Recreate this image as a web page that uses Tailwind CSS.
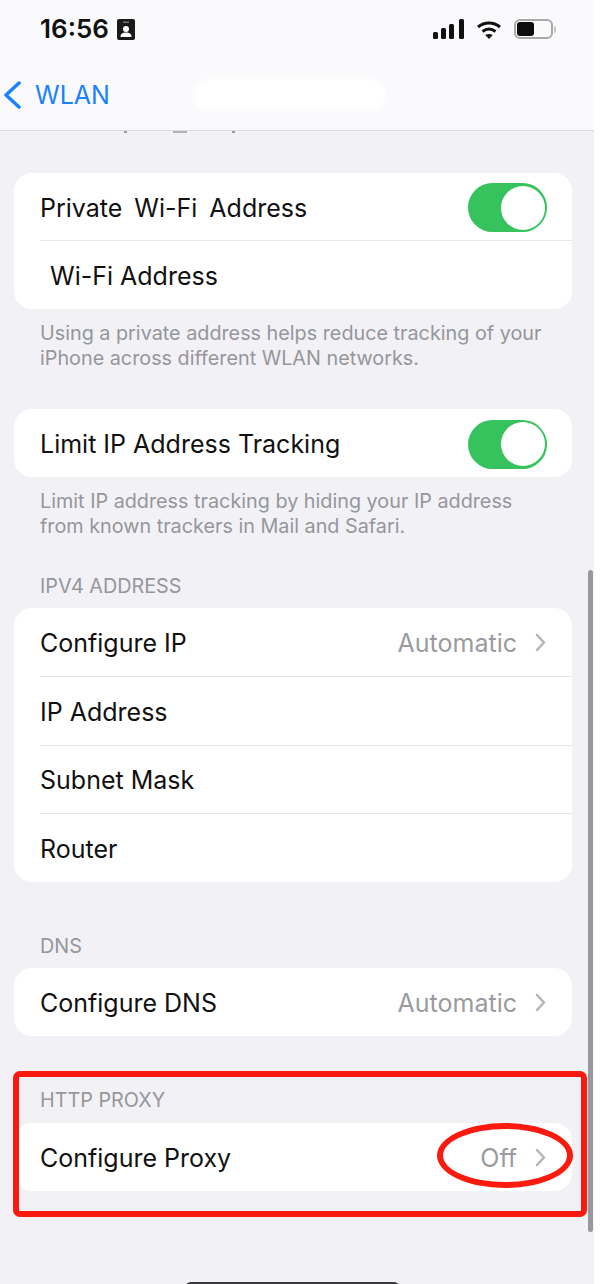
<!DOCTYPE html>
<html>
<head>
    <title>WLAN</title>
    <script src="https://cdn.jsdelivr.net/npm/@tailwindcss/browser@4"></script>
</head>
<body class="bg-white">
    <div class="relative w-[600px] h-[1284px] overflow-hidden font-['Inter','Liberation_Sans',sans-serif]">
        <div class="w-[594px] h-full bg-[#f1f1f6]">
            <!-- status bar + nav -->
            <div class="h-[131px] bg-[#fafafc] border-b border-[#dcdce0]">
                <div class="h-[58px] pl-[40px] pr-[38px] flex items-center justify-between">
                    <div class="flex items-center gap-[8px]">
                        <span class="text-[26px] leading-none font-semibold text-[#111]">16:56</span>
                        <svg width="18" height="21" viewBox="0 0 18 21"><rect width="18" height="21" rx="2" fill="#1a1a1a"/><rect x="6" y="2.500" width="6" height="1.400" fill="#777"/><circle cx="9" cy="10" r="3" fill="#fff"/><path d="M3.500 18c0-3.500 2.500-4.500 5.500-4.500s5.500 1 5.500 4.500z" fill="#fff"/></svg>
                    </div>
                    <div class="flex items-center gap-[12px]">
                        <svg width="31" height="20" viewBox="0 0 31 20"><rect x="0" y="13" width="5" height="7" rx="1.500" fill="#111"/><rect x="8" y="9" width="5" height="11" rx="1.500" fill="#111"/><rect x="16" y="5" width="5" height="15" rx="1.500" fill="#111"/><rect x="26" y="0" width="5" height="20" rx="1.500" fill="#111"/></svg>
                        <svg width="26" height="19" viewBox="0 0 26 19" fill="none" stroke="#111" stroke-width="3"><path d="M2 7c6.500-5.500 15.500-5.500 22 0"/><path d="M6.500 11.500c4-3 9-3 13 0"/><path d="M13 19l-3.800-4c2.200-1.500 5.400-1.500 7.600 0z" fill="#111" stroke="none"/></svg>
                        <div class="flex items-center gap-[1px]">
                            <div class="w-[39px] h-[20px] rounded-[6px] border-2 border-[#a9a9a9] p-[1px]">
                                <div class="w-[17px] h-full rounded-[3px] bg-[#0c0c0c]"></div>
                            </div>
                            <div class="w-[2px] h-[7px] rounded-r bg-[#c4c4c4]"></div>
                        </div>
                    </div>
                </div>
                <div class="h-[70px] mt-[2px] flex items-center pl-[3px]">
                    <svg width="18" height="30" viewBox="0 0 18 30" fill="none" stroke="#1a82fb" stroke-width="3.500" stroke-linecap="round" stroke-linejoin="round"><path d="M16 3L3 15l13 12"/></svg>
                    <span class="ml-[14px] text-[25px] leading-none text-[#1a82fb]">WLAN</span>
                    <div class="w-[193px] h-[32px] ml-[83px] rounded-full bg-white blur-[2px]"></div>
                </div>
            </div>

            <main class="relative pl-[14px] pr-[22px] pt-[42px]">
                <!-- bits of the row scrolled under the nav bar -->
                <div class="absolute left-[124px] top-0 w-[3px] h-[2px] bg-[#9a9a9f]"></div>
                <div class="absolute left-[173px] top-0 w-[14px] h-[2px] bg-[#b4b4b8]"></div>
                <div class="absolute left-[232px] top-0 w-[3px] h-[2px] bg-[#9a9a9f]"></div>

                <section class="bg-white rounded-[18px] pl-[26px]">
                    <div class="h-[68px] flex items-center justify-between pr-[25px] border-b border-[#e6e6ea]">
                        <span class="pt-[3px] text-[25px] leading-none text-[#111] [word-spacing:5px]">Private Wi-Fi Address</span>
                        <div class="translate-y-[1px] w-[79px] h-[49px] rounded-full bg-[#36c25c] flex justify-end items-center pr-[2px]">
                            <div class="w-[44px] h-[44px] rounded-full bg-white"></div>
                        </div>
                    </div>
                    <div class="h-[68px] flex items-center pl-[10px]">
                        <span class="pt-[2px] text-[25px] leading-none text-[#111]">Wi-Fi Address</span>
                    </div>
                </section>
                <p class="pl-[26px] pt-[12px] text-[19.800px] leading-[25px] text-[#96969b] whitespace-nowrap">Using a private address helps reduce tracking of your<br>iPhone across different WLAN networks.</p>

                <section class="mt-[38px] bg-white rounded-[18px] pl-[26px]">
                    <div class="h-[68px] flex items-center justify-between pr-[25px]">
                        <span class="pt-[2px] text-[25px] leading-none text-[#111]">Limit IP Address Tracking</span>
                        <div class="translate-y-[1px] w-[79px] h-[49px] rounded-full bg-[#36c25c] flex justify-end items-center pr-[2px]">
                            <div class="w-[44px] h-[44px] rounded-full bg-white"></div>
                        </div>
                    </div>
                </section>
                <p class="pl-[26px] pt-[12px] text-[19.800px] leading-[25px] text-[#96969b] whitespace-nowrap">Limit IP address tracking by hiding your IP address<br>from known trackers in Mail and Safari.</p>

                <h2 class="pl-[26px] mt-[35px] mb-[9px] text-[19.800px] leading-[25px] text-[#96969b]">IPV4 ADDRESS</h2>
                <section class="bg-white rounded-[18px] pl-[26px]">
                    <div class="h-[69px] flex items-center justify-between pr-[26px] border-b border-[#e6e6ea]">
                        <span class="pt-[2px] text-[25px] leading-none text-[#111]">Configure IP</span>
                        <div class="flex items-center gap-[18px]">
                            <span class="pt-[2px] text-[25px] leading-none text-[#9a9a9f]">Automatic</span>
                            <svg width="11" height="19" viewBox="0 0 11 19" fill="none" stroke="#b4b4b8" stroke-width="2.500" stroke-linecap="round" stroke-linejoin="round"><path d="M2 2l7 7.500L2 17"/></svg>
                        </div>
                    </div>
                    <div class="h-[69px] flex items-center border-b border-[#e6e6ea]">
                        <span class="pt-[2px] text-[25px] leading-none text-[#111]">IP Address</span>
                    </div>
                    <div class="h-[68px] flex items-center border-b border-[#e6e6ea]">
                        <span class="pt-[2px] text-[25px] leading-none text-[#111]">Subnet Mask</span>
                    </div>
                    <div class="h-[68px] flex items-center">
                        <span class="pt-[2px] text-[25px] leading-none text-[#111]">Router</span>
                    </div>
                </section>

                <h2 class="pl-[26px] mt-[52px] mb-[9px] text-[19.800px] leading-[25px] text-[#96969b]">DNS</h2>
                <section class="bg-white rounded-[18px] pl-[26px]">
                    <div class="h-[68px] flex items-center justify-between pr-[26px]">
                        <span class="pt-[2px] text-[25px] leading-none text-[#111]">Configure DNS</span>
                        <div class="flex items-center gap-[18px]">
                            <span class="pt-[2px] text-[25px] leading-none text-[#9a9a9f]">Automatic</span>
                            <svg width="11" height="19" viewBox="0 0 11 19" fill="none" stroke="#b4b4b8" stroke-width="2.500" stroke-linecap="round" stroke-linejoin="round"><path d="M2 2l7 7.500L2 17"/></svg>
                        </div>
                    </div>
                </section>

                <h2 class="pl-[26px] mt-[52px] mb-[10px] text-[19.800px] leading-[25px] text-[#96969b]">HTTP PROXY</h2>
                <section class="bg-white rounded-[18px] pl-[26px]">
                    <div class="h-[68px] flex items-center justify-between pr-[26px]">
                        <span class="pt-[2px] text-[25px] leading-none text-[#111]">Configure Proxy</span>
                        <div class="flex items-center gap-[18px]">
                            <span class="pt-[2px] text-[25px] leading-none text-[#9a9a9f]">Off</span>
                            <svg width="11" height="19" viewBox="0 0 11 19" fill="none" stroke="#b4b4b8" stroke-width="2.500" stroke-linecap="round" stroke-linejoin="round"><path d="M2 2l7 7.500L2 17"/></svg>
                        </div>
                    </div>
                </section>
            </main>
        </div>

        <!-- overlays: scrollbar, annotations, home indicator -->
        <div class="absolute left-[588px] top-[570px] w-[5px] h-[662px] rounded-full bg-[#98989e]"></div>
        <div class="absolute left-[13px] top-[1071px] w-[574px] h-[146px] rounded-[7px] border-[6px] border-[#fb1a0e]"></div>
        <div class="absolute left-[437px] top-[1123px] w-[136px] h-[65px] rounded-[50%] border-[6px] border-[#fb1a0e]"></div>
        <div class="absolute left-[185px] top-[1282px] w-[215px] h-[6px] rounded-t-full bg-[#3a3a3c]"></div>
    </div>
</body>
</html>
